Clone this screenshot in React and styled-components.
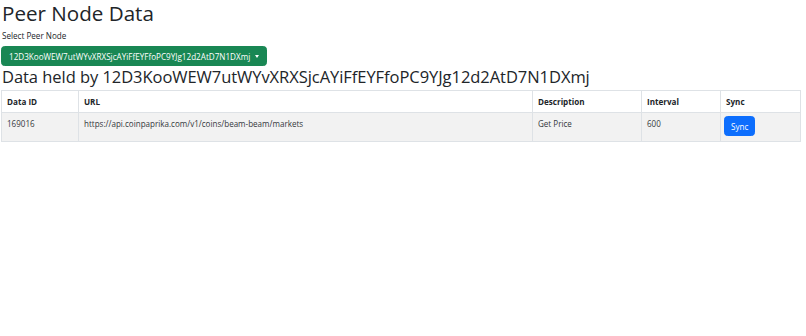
import React from "react";
import styled, { createGlobalStyle } from "styled-components";

const Global = createGlobalStyle`
  html, body { margin: 0; padding: 0; background: #fff; }
  body {
    font-family: "Open Sans", "Noto Sans", "Liberation Sans", sans-serif;
    font-size: 8.1px;
    line-height: 1.5;
    color: #212529;
  }
  * { box-sizing: border-box; }
`;

const Page = styled.div`
  display: flex;
  flex-direction: column;
  align-items: flex-start;
  padding: 0 1px;
`;

const Title = styled.h1`
  margin: 0;
  font-size: 20.6px;
  font-weight: 400;
  line-height: 27px;
  padding-left: 1px;
`;

const Label = styled.label`
  display: block;
  font-size: 8.1px;
  line-height: 14px;
  margin: 2px 0 3px 0;
  padding-left: 1px;
`;

const DropButton = styled.button`
  display: inline-flex;
  align-items: center;
  height: 20px;
  padding: 0 7px;
  background: #198754;
  border: 1px solid #198754;
  border-radius: 3.6px;
  color: #fff;
  font-family: inherit;
  font-size: 8.15px;
  cursor: pointer;
  &::after {
    content: "";
    display: inline-block;
    margin-left: 5px;
    border-top: 3px solid #fff;
    border-left: 2.6px solid transparent;
    border-right: 2.6px solid transparent;
  }
`;

const SubTitle = styled.h2`
  margin: 0 0 2px 0;
  font-size: 16.5px;
  font-weight: 400;
  line-height: 22px;
  letter-spacing: -0.05px;
  padding-left: 1px;
`;

const Table = styled.table`
  width: 799px;
  border-collapse: collapse;
  table-layout: fixed;
  border: 1px solid #dee2e6;
`;

const Th = styled.th`
  text-align: left;
  font-weight: 700;
  padding: 4px 4px 4px 5px;
  line-height: 13px;
  border: 1px solid #dee2e6;
  width: ${(p) => p.$w}px;
  vertical-align: bottom;
  font-size: 8.1px;
`;

const Row = styled.tr`
  background: ${(p) => (p.$striped ? "#f2f2f2" : "#fff")};
`;

const Td = styled.td`
  padding: 3px 4px 4px 5px;
  line-height: 14px;
  border: 1px solid #dee2e6;
  border-top: 0;
  vertical-align: top;
  color: #34383c;
  font-size: 8.05px;
  height: 29px;
`;

const CellText = styled.div`
  padding-top: 1px;
`;

const SyncCell = styled(Td)`
  padding-left: 3px;
`;

const SyncButton = styled.button`
  height: 20px;
  padding: 0 6px;
  background: #0d6efd;
  border: 1px solid #0d6efd;
  border-radius: 3.6px;
  color: #fff;
  font-family: inherit;
  font-size: 8.1px;
  cursor: pointer;
`;

const node = "12D3KooWEW7utWYvXRXSjcAYiFfEYFfoPC9YJg12d2AtD7N1DXmj";

const columns = [
  { key: "id", label: "Data ID", w: 77 },
  { key: "url", label: "URL", w: 454 },
  { key: "desc", label: "Description", w: 109 },
  { key: "interval", label: "Interval", w: 79 },
  { key: "sync", label: "Sync", w: 80 },
];

const rows = [
  {
    id: "169016",
    url: "https://api.coinpaprika.com/v1/coins/beam-beam/markets",
    desc: "Get Price",
    interval: "600",
  },
];

export default function App() {
  return (
    <>
      <Global />
      <Page>
        <Title>Peer Node Data</Title>
        <Label>Select Peer Node</Label>
        <DropButton>{node}</DropButton>
        <SubTitle>Data held by {node}</SubTitle>
        <Table>
          <thead>
            <tr>
              {columns.map((c) => (
                <Th key={c.key} $w={c.w}>
                  {c.label}
                </Th>
              ))}
            </tr>
          </thead>
          <tbody>
            {rows.map((r, i) => (
              <Row key={r.id} $striped={i % 2 === 0}>
                <Td><CellText>{r.id}</CellText></Td>
                <Td><CellText>{r.url}</CellText></Td>
                <Td><CellText>{r.desc}</CellText></Td>
                <Td><CellText>{r.interval}</CellText></Td>
                <SyncCell>
                  <SyncButton>Sync</SyncButton>
                </SyncCell>
              </Row>
            ))}
          </tbody>
        </Table>
      </Page>
    </>
  );
}
